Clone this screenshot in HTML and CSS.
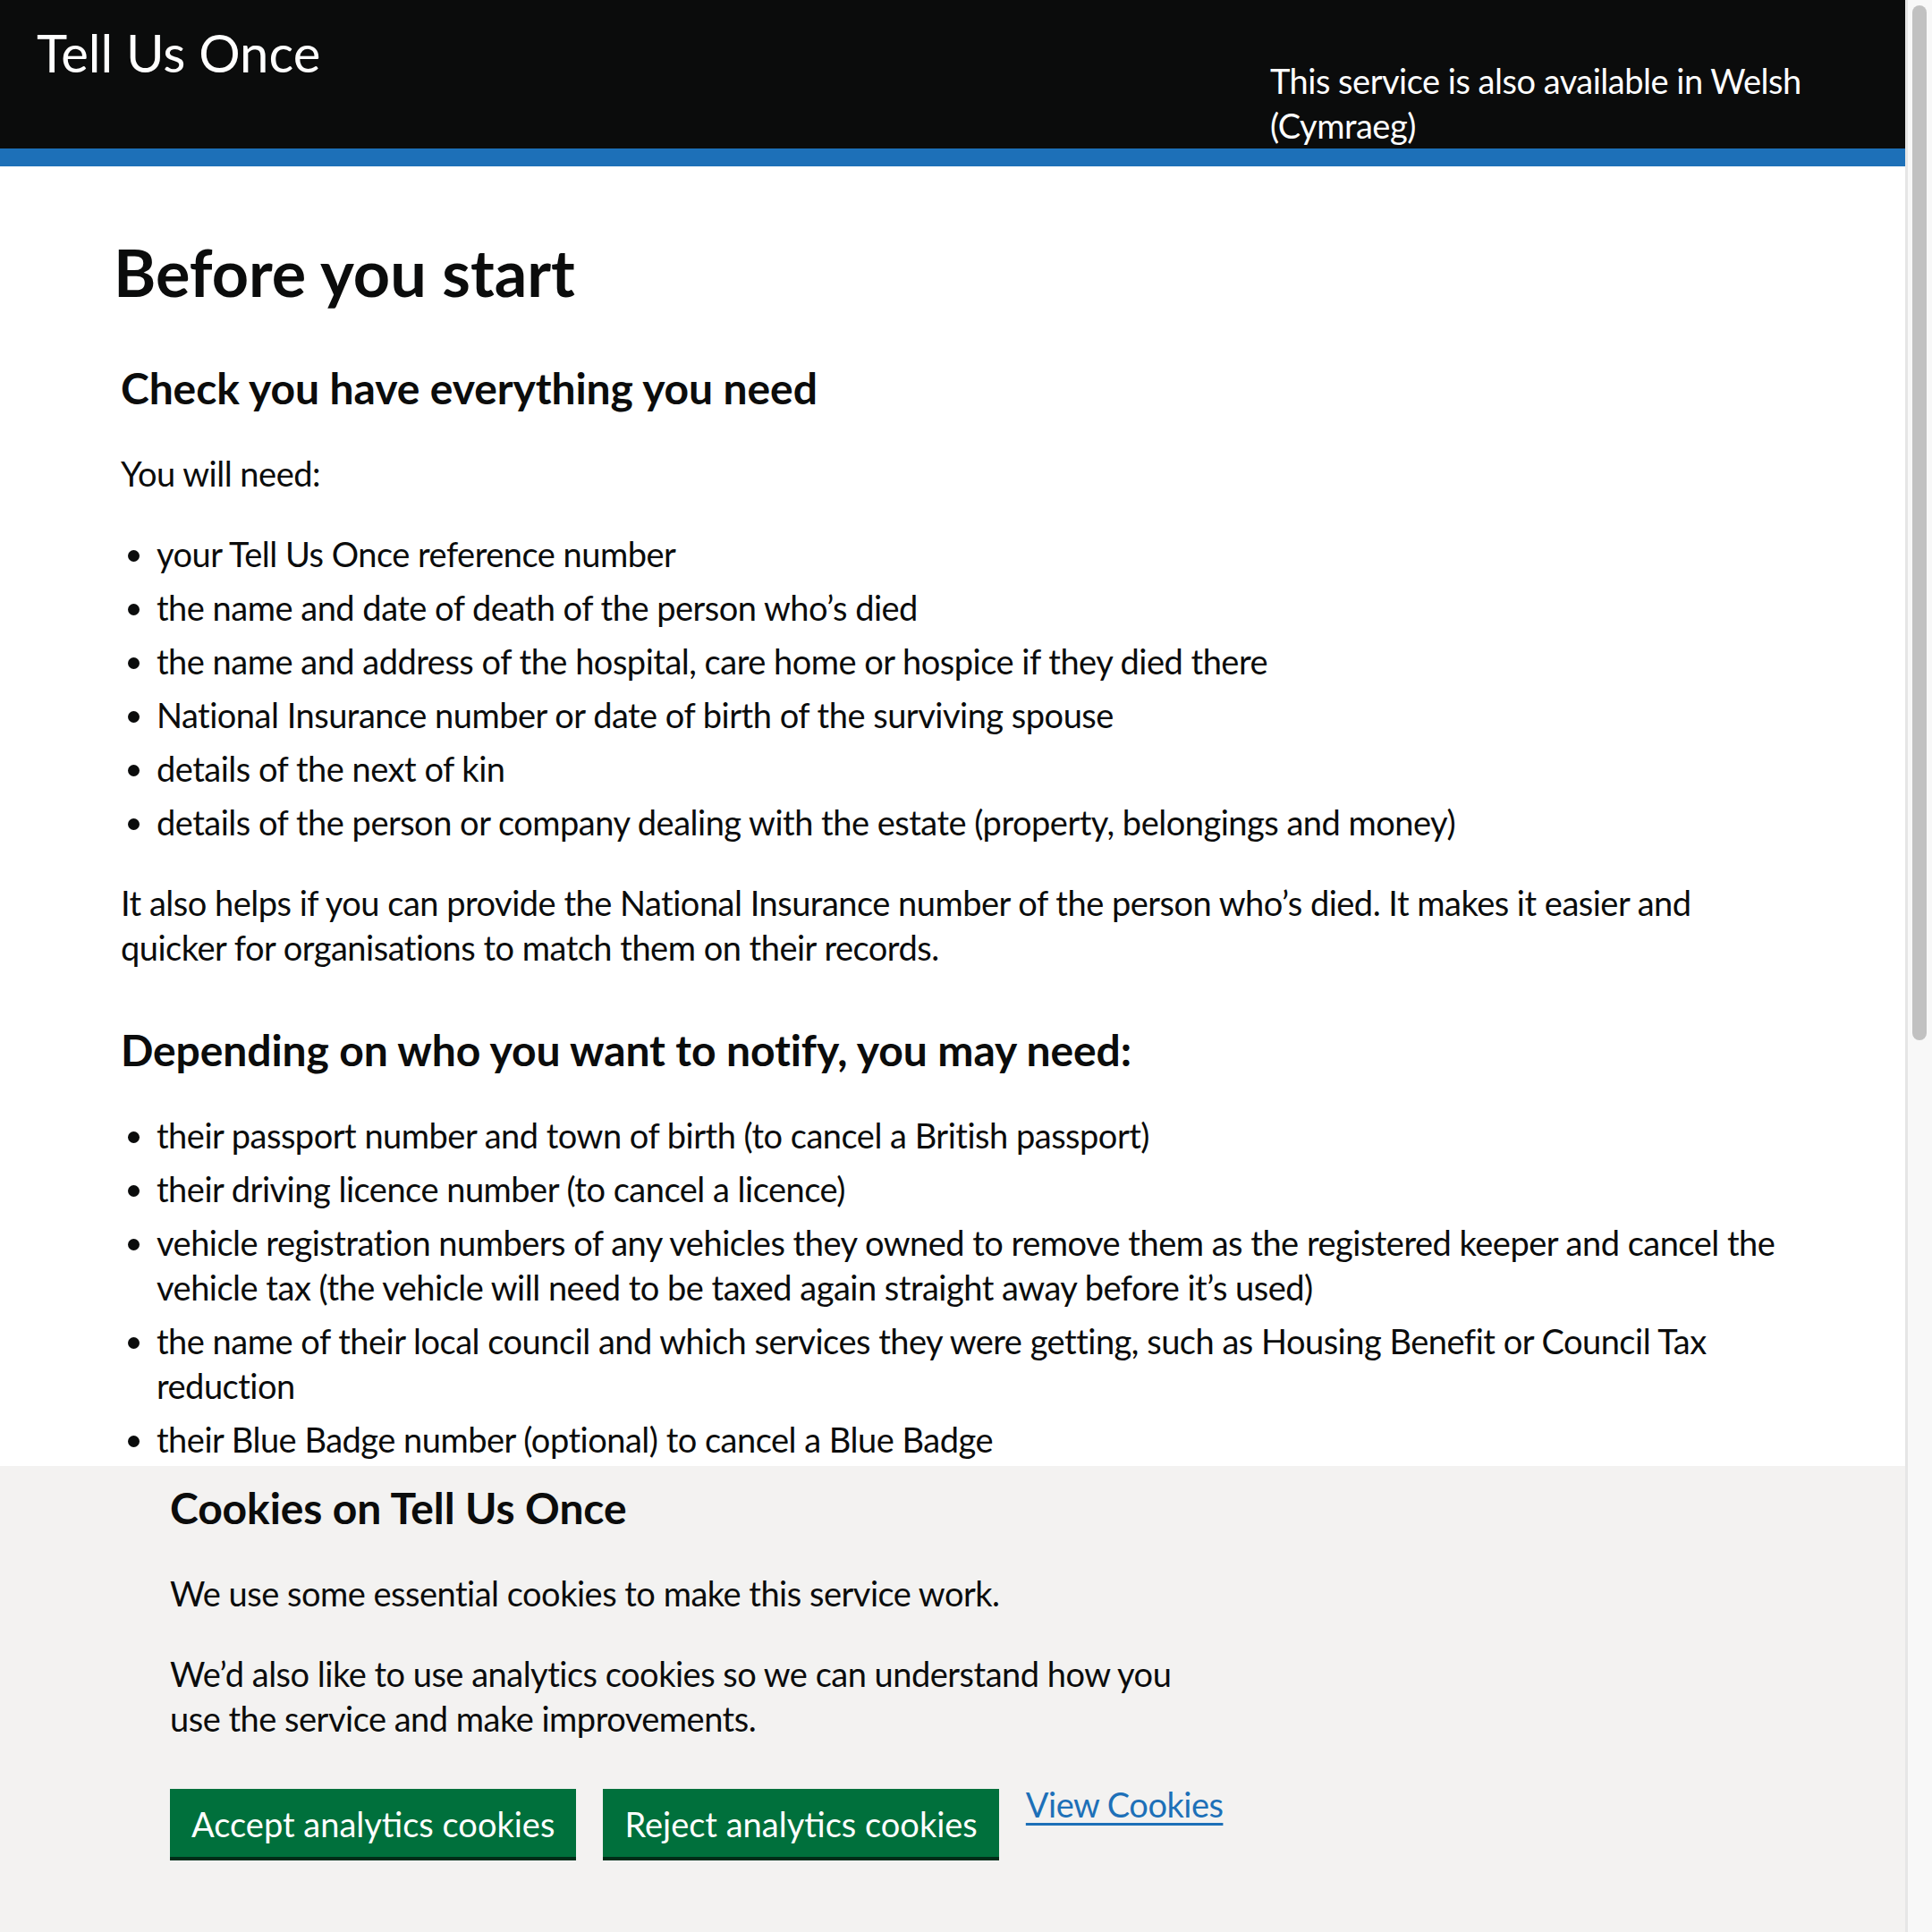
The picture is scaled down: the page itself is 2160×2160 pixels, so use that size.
FILE: index.html
```html
<!DOCTYPE html>
<html lang="en">
<head>
<meta charset="utf-8">
<title>Before you start - Tell Us Once</title>
<link rel="stylesheet" href="styles.css">
</head>
<body>
<header class="header">
  <div class="header__service">Tell Us Once</div>
  <div class="header__lang">This service is also available in Welsh (Cymraeg)</div>
</header>
<main class="main">
  <h1 class="heading-l">Before you start</h1>
  <h2 class="heading-m">Check you have everything you need</h2>
  <p class="body">You will need:</p>
  <ul class="list">
    <li>your Tell Us Once reference number</li>
    <li>the name and date of death of the person who’s died</li>
    <li>the name and address of the hospital, care home or hospice if they died there</li>
    <li>National Insurance number or date of birth of the surviving spouse</li>
    <li>details of the next of kin</li>
    <li>details of the person or company dealing with the estate (property, belongings and money)</li>
  </ul>
  <p class="body">It also helps if you can provide the National Insurance number of the person who’s died. It makes it easier and quicker for organisations to match them on their records.</p>
  <h2 class="heading-m heading-m--spaced">Depending on who you want to notify, you may need:</h2>
  <ul class="list">
    <li>their passport number and town of birth (to cancel a British passport)</li>
    <li>their driving licence number (to cancel a licence)</li>
    <li>vehicle registration numbers of any vehicles they owned to remove them as the registered keeper and cancel the vehicle tax (the vehicle will need to be taxed again straight away before it’s used)</li>
    <li>the name of their local council and which services they were getting, such as Housing Benefit or Council Tax reduction</li>
    <li>their Blue Badge number (optional) to cancel a Blue Badge</li>
  </ul>
</main>
<div class="cookie-banner" role="region" aria-label="Cookies on Tell Us Once">
  <div class="cookie-banner__content">
    <h2 class="heading-m">Cookies on Tell Us Once</h2>
    <p class="body">We use some essential cookies to make this service work.</p>
    <p class="body body--last">We’d also like to use analytics cookies so we can understand how you use the service and make improvements.</p>
  </div>
  <div class="button-group">
    <button class="button" type="button">Accept analytics cookies</button>
    <button class="button" type="button">Reject analytics cookies</button>
    <a class="link" href="#">View Cookies</a>
  </div>
</div>
<div class="scrollbar" aria-hidden="true">
  <div class="scrollbar__thumb"></div>
</div>
</body>
</html>
```

FILE: styles.css
```css
body {
  margin: 0 30px 0 0;
  font-family: Lato, "Liberation Sans", sans-serif;
  color: #0b0c0c;
  background: #ffffff;
}

.header {
  display: flex;
  justify-content: space-between;
  align-items: flex-start;
  background: #0b0c0c;
  color: #ffffff;
  border-bottom: 20px solid #1d70b8;
}

.header__service {
  font-size: 58px;
  line-height: 70px;
  margin: 24px 0 0 41px;
}

.header__lang {
  width: 680px;
  margin: 65px 30px 1px 0;
  font-size: 38px;
  line-height: 50px;
  letter-spacing: -0.5px;
}

.main {
  padding: 78px 125px 0 135px;
}

.heading-l {
  font-size: 72px;
  line-height: 80px;
  font-weight: 700;
  margin: 0 0 60px -8px;
}

.heading-m {
  font-size: 48px;
  line-height: 60px;
  font-weight: 700;
  letter-spacing: -0.1px;
  margin: 0 0 40px;
}

.heading-m--spaced {
  padding-top: 20px;
}

.body {
  font-size: 38px;
  line-height: 50px;
  letter-spacing: -0.5px;
  margin: 0 0 40px;
}

.list {
  font-size: 38px;
  line-height: 50px;
  letter-spacing: -0.5px;
  margin: 0 0 40px;
  padding-left: 40px;
  list-style: disc;
}

.list li {
  margin-bottom: 10px;
}

.cookie-banner {
  position: fixed;
  left: 0;
  right: 30px;
  bottom: 0;
  background: #f3f2f1;
  padding: 17px 0 84px 190px;
}

.cookie-banner__content {
  width: 1150px;
}

.body--last {
  margin-bottom: 54px;
}

.button-group {
  display: flex;
  align-items: flex-start;
  gap: 30px;
}

.button {
  font-family: inherit;
  font-size: 38px;
  line-height: 38px;
  font-weight: 400;
  color: #ffffff;
  background: #00703c;
  border: 4px solid transparent;
  border-radius: 0;
  padding: 16px 20px 14px;
  margin: 0;
  box-shadow: 0 4px 0 #002d18;
  cursor: pointer;
}

.link {
  font-size: 38px;
  line-height: 50px;
  letter-spacing: -0.5px;
  margin-top: -8px;
  color: #1d70b8;
  text-decoration: underline;
  text-decoration-thickness: 3px;
  text-underline-offset: 6px;
}

.scrollbar {
  position: fixed;
  top: 0;
  right: 0;
  bottom: 0;
  width: 30px;
  box-sizing: border-box;
  padding: 6px 6px 0 8px;
  background: #f8f8f8;
  box-shadow: inset 3px 0 0 #e6e6e6;
}

.scrollbar__thumb {
  height: 1157px;
  background: #c1c1c1;
  border-radius: 8px;
}
```
